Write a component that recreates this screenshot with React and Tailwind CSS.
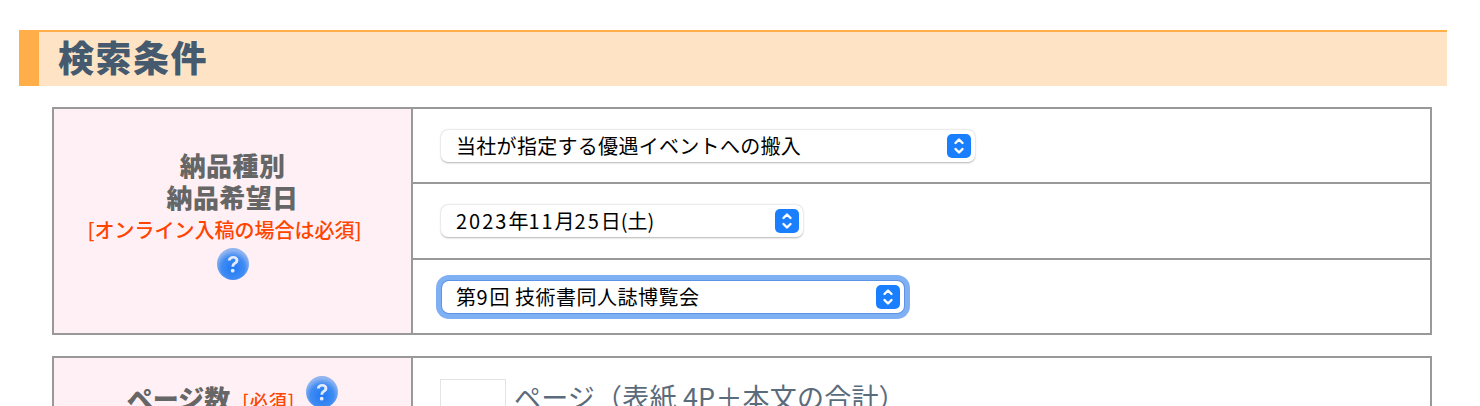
import React from 'react';

const cjk = "font-['Noto_Sans_CJK_JP','Liberation_Sans',sans-serif]";

function HelpIcon({ id }) {
    return (
        <svg width="32" height="32" viewBox="0 0 32 32" className="block">
            <defs>
                <radialGradient id={id} cx="50%" cy="62%" r="55%">
                    <stop offset="0%" stopColor="#1f78f5" />
                    <stop offset="65%" stopColor="#3f8bf3" />
                    <stop offset="100%" stopColor="#8fb4f0" />
                </radialGradient>
            </defs>
            <circle cx="16" cy="16" r="16" fill={`url(#${id})`} />
            <path d="M10.800 12.500c.3-3 2.500-4.600 5.400-4.600 3.100 0 5.200 1.700 5.200 4.300 0 2-1.100 3-2.500 4-1.200.8-1.600 1.300-1.600 2.600h-2.800c0-2.200.7-3.200 2.100-4.200 1.100-.8 1.800-1.300 1.800-2.300 0-1.100-.8-1.800-2.100-1.800-1.400 0-2.300.8-2.500 2.100z" fill="#e4ecfb" />
            <circle cx="15.700" cy="22.700" r="1.900" fill="#e4ecfb" />
        </svg>
    );
}

function SelectBox({ children, width, tracking, focused }) {
    const box = (
        <div className={`${width} h-[32px] flex items-center justify-between pr-[4px] bg-white rounded-[7px] ${focused ? 'pl-[14px] shadow-[0_0_0_1px_#5c93e6]' : 'pl-[15px] shadow-[0_0.5px_2px_rgba(0,0,0,0.3)]'}`}>
            <span className={`text-[20px] leading-none text-black whitespace-nowrap ${tracking}`}>{children}</span>
            <span className="w-[24px] h-[24px] rounded-[5px] bg-[#1a7fff] flex items-center justify-center">
                <svg width="12" height="18" viewBox="0 0 12 18" fill="none" stroke="white" strokeWidth="2.400" strokeLinecap="round" strokeLinejoin="round">
                    <path d="M2.500 6 6 2.500 9.500 6" />
                    <path d="M2.500 12 6 15.500 9.500 12" />
                </svg>
            </span>
        </div>
    );
    if (!focused) return box;
    return <div className="ml-[-5px] p-[6px] rounded-[13px] bg-[#7fb0f4] w-fit">{box}</div>;
}

export default function App() {
    return (
        <div className={`${cjk} bg-white h-[406px] overflow-hidden pt-[30px] pl-[19px] pr-[33px]`}>
            <h2 className="h-[56px] border-t-2 border-l-[20px] border-[#ffae4a] bg-[#fee4c4] pl-[19px] pb-[6px] flex items-center text-[36px] font-black leading-none text-[#455a6e] tracking-[1.5px]">
                検索条件
            </h2>

            <div className="ml-[33px] mr-[15px] mt-[21px] flex flex-col gap-[21px]">
                <div className="h-[228px] flex border-2 border-[#999999]">
                    <div className="w-[359px] shrink-0 bg-[#fff0f5] border-r-2 border-[#999999] flex flex-col items-center justify-center pb-[13px]">
                        <div className="text-[26px] leading-[32px] font-black text-[#666666] text-center tracking-[0.4px]">
                            <div>納品種別</div>
                            <div>納品希望日</div>
                        </div>
                        <div className="text-[20px] leading-[34px] font-medium text-[#ff4400] mr-[16px]">[オンライン入稿の場合は必須]</div>
                        <div className="mt-[1px]"><HelpIcon id="help-a" /></div>
                    </div>
                    <div className="flex-1 flex flex-col">
                        <div className="h-[75px] flex items-center pl-[28px] border-b-2 border-[#999999]">
                            <SelectBox width="w-[534px]" tracking="tracking-[0.3px]">当社が指定する優遇イベントへの搬入</SelectBox>
                        </div>
                        <div className="h-[76px] flex items-center pl-[28px] border-b-2 border-[#999999]">
                            <SelectBox width="w-[362px]">
                                <span className="tracking-[2px]">2023</span>年<span className="tracking-[2px]">11</span>月<span className="tracking-[2px]">25</span>日(土)
                            </SelectBox>
                        </div>
                        <div className="flex-1 flex items-center pl-[28px]">
                            <SelectBox width="w-[462px]" tracking="tracking-[0.5px]" focused>
                                第<span className="tracking-[2px]">9</span>回 技術書同人誌博覧会
                            </SelectBox>
                        </div>
                    </div>
                </div>

                <div className="h-[200px] flex border-2 border-[#999999]">
                    <div className="w-[359px] shrink-0 bg-[#fff0f5] border-r-2 border-[#999999] pt-[19px] flex justify-center items-start">
                        <span className="text-[26px] leading-[42px] font-black text-[#666666]">ページ数</span>
                        <span className="text-[18px] leading-[46px] font-medium text-[#ff4400] ml-[12px] tracking-[1px]">[必須]</span>
                        <span className="ml-[11px] mt-[-1px]"><HelpIcon id="help-b" /></span>
                    </div>
                    <div className="flex-1 pl-[27px] pt-[21px] flex items-start">
                        <div className="w-[66px] h-[50px] border border-[#e4e4e4] bg-white" />
                        <span className="ml-[8px] text-[27px] leading-[36px] text-[#5a6b7b] tracking-[0.2px]">ページ（表紙 4P＋本文の合計）</span>
                    </div>
                </div>
            </div>
        </div>
    );
}
